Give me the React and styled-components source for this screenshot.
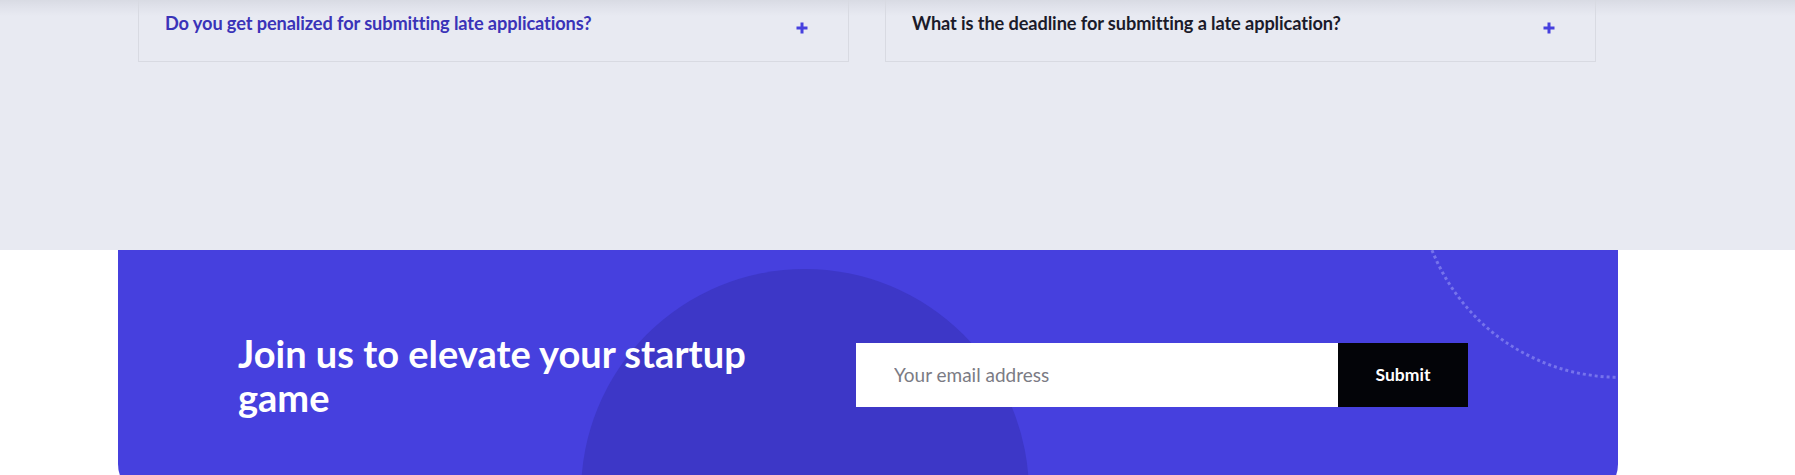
import React from "react";
import styled, { createGlobalStyle } from "styled-components";

const GlobalStyle = createGlobalStyle`
  * { box-sizing: border-box; }
  html, body { margin: 0; padding: 0; background: #ffffff; }
  body { font-family: "Lato", "Open Sans", sans-serif; overflow: hidden; }
  #root { height: 475px; overflow: hidden; }
`;

const Page = styled.div`
  width: 1795px;
  height: 475px;
  overflow: hidden;
`;

const Scrolled = styled.div`
  margin-top: -14px;
`;

const FaqSection = styled.section`
  height: 264px;
  background: linear-gradient(to bottom, #c9ccd4 0px, #dfe1ea 20px, #e8eaf2 30px, #e8eaf2 100%);
`;

const Container = styled.div`
  width: 1500px;
  margin-left: 118px;
`;

const FaqGrid = styled.div`
  display: grid;
  grid-template-columns: 711px 711px;
  column-gap: 36px;
  padding: 0 21px 0 20px;
`;

const FaqCard = styled.div`
  display: flex;
  align-items: flex-start;
  justify-content: space-between;
  border: 1px solid #d8dae2;
  border-top: none;
  padding: 24px 40px 24px 26px;
`;

const Question = styled.h3`
  margin: 0;
  font-family: "Lato", sans-serif;
  font-weight: 700;
  font-size: 18.2px;
  line-height: 27px;
  letter-spacing: -0.1px;
  color: ${(p) => (p.$active ? "#3a33b8" : "#1b1b2a")};
`;

const PlusIcon = styled.svg`
  width: 12px;
  height: 12px;
  margin-top: 12px;
  flex-shrink: 0;
`;

const Banner = styled.div`
  position: relative;
  overflow: hidden;
  height: 248px;
  background: #4640de;
  border-radius: 0 0 34px 34px;
  display: grid;
  grid-template-columns: 618px 612px;
  align-items: center;
  padding: 1px 150px 0 120px;
`;

const Blob = styled.div`
  position: absolute;
  left: 463px;
  top: 19px;
  width: 448px;
  height: 448px;
  border-radius: 50%;
  background: #3d37c7;
`;

const DottedRing = styled.div`
  position: absolute;
  left: 1298px;
  top: -279px;
  width: 408px;
  height: 408px;
  border-radius: 50%;
  border: 3px dotted rgba(150, 150, 245, 0.6);
`;

const Heading = styled.h2`
  position: relative;
  margin: 0;
  max-width: 560px;
  font-family: "Lato", sans-serif;
  font-weight: 700;
  font-size: 38px;
  line-height: 44px;
  letter-spacing: 0;
  color: #ffffff;
`;

const Form = styled.form`
  position: relative;
  display: flex;
  height: 64px;
`;

const EmailInput = styled.input`
  flex: 1;
  border: none;
  outline: none;
  background: #ffffff;
  padding: 0 38px;
  font-family: "Lato", sans-serif;
  font-size: 19px;
  color: #222;
  &::placeholder { color: #7b7b84; }
`;

const SubmitButton = styled.button`
  width: 130px;
  border: none;
  background: #030408;
  color: #ffffff;
  font-family: "Lato", sans-serif;
  font-weight: 700;
  font-size: 17.5px;
  cursor: pointer;
`;

const Plus = () => (
  <PlusIcon viewBox="0 0 12 12">
    <path d="M6 0.5v11M0.5 6h11" stroke="#4640de" strokeWidth="3" fill="none" />
  </PlusIcon>
);

const faqs = [
  { q: "Do you get penalized for submitting late applications?", active: true },
  { q: "What is the deadline for submitting a late application?", active: false },
];

export default function App() {
  return (
    <Page>
      <GlobalStyle />
      <Scrolled>
        <FaqSection>
          <Container>
            <FaqGrid>
              {faqs.map((f) => (
                <FaqCard key={f.q}>
                  <Question $active={f.active}>{f.q}</Question>
                  <Plus />
                </FaqCard>
              ))}
            </FaqGrid>
          </Container>
        </FaqSection>
        <Container>
          <Banner>
            <Blob />
            <DottedRing />
            <Heading>Join us to elevate your startup game</Heading>
            <Form onSubmit={(e) => e.preventDefault()}>
              <EmailInput type="email" placeholder="Your email address" />
              <SubmitButton type="submit">Submit</SubmitButton>
            </Form>
          </Banner>
        </Container>
      </Scrolled>
    </Page>
  );
}
